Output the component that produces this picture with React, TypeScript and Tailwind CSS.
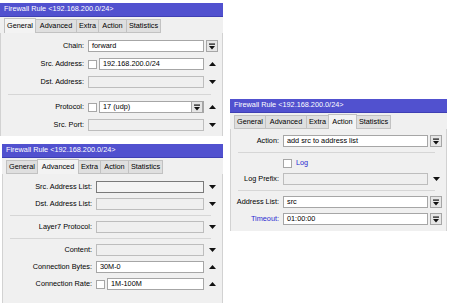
import { ReactNode } from "react"

const TABS = ["General", "Advanced", "Extra", "Action", "Statistics"]
const TAB_W = ["w-[32px]", "w-[42px]", "w-[23px]", "w-[29px]", "w-[35px]"]

function DropIcon() {
  return (
    <svg width="6" height="7" viewBox="0 0 6 7">
      <rect x="0" y="0.5" width="6" height="1.2" fill="#111" />
      <path d="M0 3 H6 L3 6.5 Z" fill="#111" />
    </svg>
  )
}

function Btn() {
  return (
    <div className="flex h-[12px] w-[12px] shrink-0 items-center justify-center border border-[#a6a6a6] bg-[#e6e6e6]">
      <DropIcon />
    </div>
  )
}

function Tri({ up }: { up?: boolean }) {
  return (
    <div className="flex h-[12px] w-[12px] items-center justify-center">
      <svg width="7" height="4" viewBox="0 0 7 4">
        <path d={up ? "M0 4 H7 L3.5 0 Z" : "M0 0 H7 L3.5 4 Z"} fill="#111" />
      </svg>
    </div>
  )
}

function Check() {
  return <div className="mr-[2px] h-[9px] w-[9px] shrink-0 border border-[#a6a6a6] bg-white" />
}

function Field({ value, check, inBtn, focus }: { value?: string; check?: boolean; inBtn?: boolean; focus?: boolean }) {
  const filled = value !== undefined
  return (
    <div className="flex min-w-0 flex-1 items-center">
      {check && <Check />}
      <div
        className={
          "flex h-[12px] min-w-0 flex-1 items-center border " +
          (focus
            ? "border-[#7a7a7a] bg-[#f4f4f4]"
            : filled
              ? "border-[#a6a6a6] bg-white"
              : "border-[#bdbdbd] bg-[#efefef]")
        }
      >
        <span className="flex-1 truncate pl-[3px] leading-[10px]">{value}</span>
        {inBtn && <Btn />}
      </div>
    </div>
  )
}

function Row({ label, lw, blue, children, trail }: { label: string; lw: string; blue?: boolean; children: ReactNode; trail?: ReactNode }) {
  return (
    <div className="flex h-[12px] items-center">
      <div className={lw + " shrink-0 pr-[4px] text-right " + (blue ? "text-[#2a2ad0]" : "text-black")}>{label}</div>
      {children}
      <div className="flex w-[14px] shrink-0 justify-end">{trail}</div>
    </div>
  )
}

function Sep() {
  return <div className="mx-[7px] h-px bg-[#d6d6d6]" />
}

function Win({ active, pos, children }: { active: number; pos: string; children: ReactNode }) {
  return (
    <div className={"absolute flex flex-col " + pos}>
      <div className="flex h-[14px] shrink-0 items-center border-b border-[#3f3fb4] bg-[#5151cf] pl-[4px] text-white">
        Firewall Rule &lt;192.168.200.0/24&gt;
      </div>
      <div className="flex h-[16px] shrink-0 items-end bg-[#f0f0f0] pl-[5px]">
        {TABS.map((t, i) => (
          <div
            key={t}
            className={
              TAB_W[i] +
              " -ml-px flex shrink-0 items-center justify-center border " +
              (i === active
                ? "relative z-10 h-[15px] border-b-0 border-[#c2c2c2] bg-[#f3f3f3]"
                : "h-[14px] border-[#c2c2c2] bg-[#dfdfdf]")
            }
          >
            {t}
          </div>
        ))}
      </div>
      <div className="flex flex-1 flex-col border-x border-[#d2d2d2] bg-[#f0f0f0] pr-[4px]">{children}</div>
    </div>
  )
}

export default function App() {
  return (
    <div className="relative h-[303px] w-[450px] overflow-hidden bg-white font-['Liberation_Sans',Arial,sans-serif] text-[7.3px] text-black">
      <Win active={0} pos="left-0 top-[3px] h-[133px] w-[223px]">
        <div className="flex flex-col gap-[6px] pt-[7px]">
          <Row label="Chain:" lw="w-[87px]" trail={<Btn />}>
            <Field value="forward" />
          </Row>
          <Row label="Src. Address:" lw="w-[87px]" trail={<Tri up />}>
            <Field check value="192.168.200.0/24" />
          </Row>
          <Row label="Dst. Address:" lw="w-[87px]" trail={<Tri />}>
            <Field />
          </Row>
          <Sep />
          <Row label="Protocol:" lw="w-[87px]" trail={<Tri up />}>
            <Field check value="17 (udp)" inBtn />
          </Row>
          <Row label="Src. Port:" lw="w-[87px]" trail={<Tri />}>
            <Field />
          </Row>
        </div>
      </Win>

      <Win active={1} pos="left-[2px] top-[144px] h-[170px] w-[221px]">
        <div className="flex flex-col gap-[5px] pt-[7px]">
          <Row label="Src. Address List:" lw="w-[93px]" trail={<Tri />}>
            <Field focus />
          </Row>
          <Row label="Dst. Address List:" lw="w-[93px]" trail={<Tri />}>
            <Field />
          </Row>
          <Sep />
          <Row label="Layer7 Protocol:" lw="w-[93px]" trail={<Tri />}>
            <Field />
          </Row>
          <Sep />
          <Row label="Content:" lw="w-[93px]" trail={<Tri />}>
            <Field />
          </Row>
          <Row label="Connection Bytes:" lw="w-[93px]" trail={<Tri up />}>
            <Field value="30M-0" />
          </Row>
          <Row label="Connection Rate:" lw="w-[93px]" trail={<Tri up />}>
            <Field check value="1M-100M" />
          </Row>
        </div>
      </Win>

      <Win active={3} pos="left-[230px] top-[99px] h-[132px] w-[217px]">
        <div className="flex flex-col gap-[5px] pt-[6px]">
          <Row label="Action:" lw="w-[52px]" trail={<Btn />}>
            <Field value="add src to address list" />
          </Row>
          <Sep />
          <div className="flex h-[10px] items-center pl-[52px]">
            <Check />
            <span className="pl-[2px] text-[#2a2ad0]">Log</span>
          </div>
          <Row label="Log Prefix:" lw="w-[52px]" trail={<Tri />}>
            <Field />
          </Row>
          <Sep />
          <Row label="Address List:" lw="w-[52px]" trail={<Btn />}>
            <Field value="src" />
          </Row>
          <Row label="Timeout:" lw="w-[52px]" blue trail={<Btn />}>
            <Field value="01:00:00" />
          </Row>
        </div>
      </Win>
    </div>
  )
}
